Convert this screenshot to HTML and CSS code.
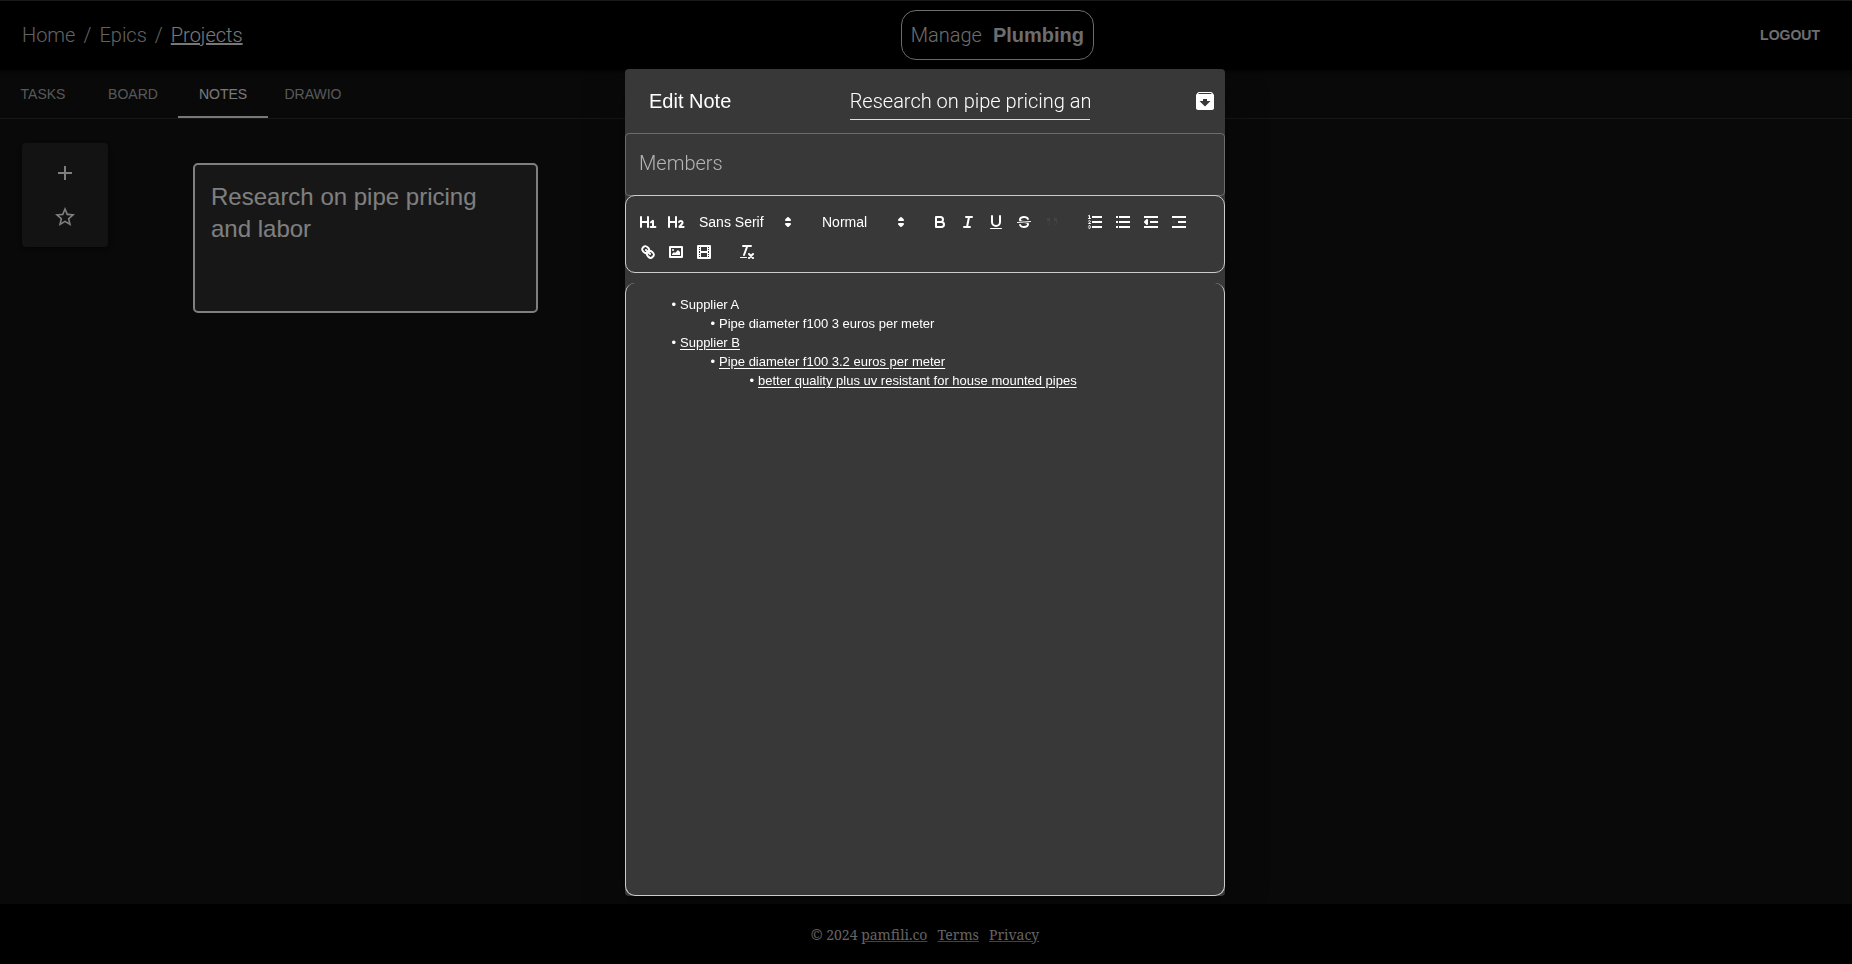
FILE: index.html
```
<!DOCTYPE html>
<html lang="en">
<head>
  <meta charset="utf-8">
  <meta name="viewport" content="width=device-width, initial-scale=1">
  <title>Manage Plumbing - Notes</title>
  <link rel="stylesheet" href="styles.css">
</head>
<body>
  <header class="topbar">
    <nav class="breadcrumbs" aria-label="Breadcrumb">
      <a href="#">Home</a>
      <span>/</span>
      <a href="#">Epics</a>
      <span>/</span>
      <a href="#" class="current">Projects</a>
    </nav>
    <div class="brand"><span>Manage</span><strong>Plumbing</strong></div>
    <button class="logout" type="button">LOGOUT</button>
  </header>

  <nav class="tabs">
    <a href="#" class="tab">TASKS</a>
    <a href="#" class="tab">BOARD</a>
    <a href="#" class="tab active">NOTES</a>
    <a href="#" class="tab">DRAWIO</a>
  </nav>

  <main class="content">
    <aside class="actions">
      <button type="button" aria-label="Add note">
        <svg viewBox="0 0 24 24"><path d="M19 13h-6v6h-2v-6H5v-2h6V5h2v6h6v2z"/></svg>
      </button>
      <button type="button" aria-label="Favourites">
        <svg viewBox="0 0 24 24"><path d="M22 9.24l-7.19-.62L12 2 9.19 8.63 2 9.24l5.46 4.73L5.82 21 12 17.27 18.18 21l-1.63-7.03L22 9.24zM12 15.4l-3.76 2.27 1-4.28-3.32-2.88 4.38-.38L12 6.1l1.71 4.04 4.38.38-3.32 2.88 1 4.28L12 15.4z"/></svg>
      </button>
    </aside>
    <article class="note-card">Research on pipe pricing and labor</article>
  </main>

  <footer class="footer">
    <span>© 2024 <a href="#">pamfili.co</a></span>
    <a href="#">Terms</a>
    <a href="#">Privacy</a>
  </footer>

  <div class="backdrop">
    <section class="modal" role="dialog" aria-label="Edit Note">
      <div class="modal-header">
        <h2>Edit Note</h2>
        <input class="note-title" type="text" aria-label="Note title" value="Research on pipe pricing and labor">
        <button class="archive" type="button" aria-label="Archive">
          <svg viewBox="0 0 24 24"><path d="M20.54 5.23l-1.39-1.68C18.88 3.21 18.47 3 18 3H6c-.47 0-.88.21-1.16.55L3.46 5.23C3.17 5.57 3 6.02 3 6.5V19c0 1.1.9 2 2 2h14c1.1 0 2-.9 2-2V6.5c0-.48-.17-.93-.46-1.27zM12 17.5L6.5 12H10v-2h4v2h3.5L12 17.5zM5.12 5l.81-1h12l.94 1H5.12z"/></svg>
        </button>
      </div>

      <input class="members" type="text" aria-label="Members" placeholder="Members">

      <div class="toolbar">
        <div class="formats">
          <button type="button" aria-label="Heading 1">
            <svg viewBox="0 0 18 18"><path class="stroke" d="M2 4V14M9 4V14M2 9H9M12 9.3L14 7.8V14M11.7 14H16.4"/></svg>
          </button>
          <button type="button" aria-label="Heading 2">
            <svg viewBox="0 0 18 18"><path class="stroke" d="M2 4V14M9 4V14M2 9H9M12 9C12.4 7.5 15.6 7.4 15.6 9.4C15.6 11 13.5 11.8 12.4 14H16.6"/></svg>
          </button>
          <label class="picker picker-font">
            <select aria-label="Font"><option>Sans Serif</option><option>Serif</option><option>Monospace</option></select>
            <svg viewBox="0 0 18 18"><path class="stroke fill" d="M7 11L9 13L11 11ZM7 7L9 5L11 7Z"/></svg>
          </label>
        </div>
        <div class="formats">
          <label class="picker picker-size">
            <select aria-label="Size"><option>Normal</option><option>Small</option><option>Large</option></select>
            <svg viewBox="0 0 18 18"><path class="stroke fill" d="M7 11L9 13L11 11ZM7 7L9 5L11 7Z"/></svg>
          </label>
        </div>
        <div class="formats">
          <button type="button" aria-label="Bold">
            <svg viewBox="0 0 18 18"><path class="stroke" d="M5 4H9.5A2.5 2.5 0 0 1 9.5 9H5ZM5 9H10.5A2.5 2.5 0 0 1 10.5 14H5Z"/></svg>
          </button>
          <button type="button" aria-label="Italic">
            <svg viewBox="0 0 18 18"><path class="stroke" d="M7 4H13M5 14H11M8 14L10 4"/></svg>
          </button>
          <button type="button" aria-label="Underline">
            <svg viewBox="0 0 18 18"><path class="stroke" d="M5 3V9a4 4 0 0 0 8 0V3"/><rect class="fill" x="3" y="15" width="12" height="1" rx=".5"/></svg>
          </button>
          <button type="button" aria-label="Strike">
            <svg viewBox="0 0 18 18"><path class="stroke thin" d="M15.5 8.5L2.5 9.5"/><path class="fill" d="M9.007,8C6.542,7.791,6,7.519,6,6.5,6,5.792,7.283,5,9,5c1.571,0,2.765.679,2.969,1.309a1,1,0,0,0,1.9-.617C13.356,4.106,11.354,3,9,3,6.2,3,4,4.538,4,6.5a3.2,3.2,0,0,0,.5,1.843Z"/><path class="fill" d="M8.984,10C11.457,10.208,12,10.479,12,11.5c0,.708-1.283,1.5-3,1.5-1.571,0-2.765-.679-2.969-1.309a1,1,0,1,0-1.9.617C4.644,13.894,6.646,15,9,15c2.8,0,5-1.538,5-3.5a3.2,3.2,0,0,0-.5-1.843Z"/></svg>
          </button>
          <button class="dim" type="button" aria-label="Blockquote">
            <svg viewBox="0 0 18 18"><rect class="fill" x="4" y="5" width="3" height="3"/><rect class="fill" x="11" y="5" width="3" height="3"/><path class="stroke thin" d="M7 8c0 4-3 5-3 5M14 8c0 4-3 5-3 5"/></svg>
          </button>
        </div>
        <div class="formats">
          <button type="button" aria-label="Ordered list">
            <svg viewBox="0 0 18 18"><path class="stroke square" d="M7 4H15M7 9H15M7 14H15"/><path class="stroke thin" d="M2.5 5.5H4.5M2.5 2.8L3.5 2.3V5.5M4.5 10.5h-2c0-.234,1.85-1.076,1.85-2.234A.959.959,0,0,0,2.5,8.156M2.5,14.846a.959.959,0,0,0,1.85-.109A.7.7,0,0,0,3.75,14a.688.688,0,0,0,.6-.736.959.959,0,0,0-1.85-.109"/></svg>
          </button>
          <button type="button" aria-label="Bullet list">
            <svg viewBox="0 0 18 18"><path class="stroke square" d="M6 4H15M6 9H15M6 14H15"/><path class="fill" d="M2 3h2v2H2zM2 8h2v2H2zM2 13h2v2H2z"/></svg>
          </button>
          <button type="button" aria-label="Outdent">
            <svg viewBox="0 0 18 18"><path class="stroke square" d="M3 14H15M3 4H15M9 9H15"/><path class="stroke fill" d="M5 7V11L3 9Z"/></svg>
          </button>
          <button type="button" aria-label="Indent">
            <svg viewBox="0 0 18 18"><path class="stroke square" d="M3 14H15M3 4H15M9 9H15"/><path class="muted" d="M3 7V11L5 9Z"/></svg>
          </button>
        </div>
        <div class="formats">
          <button type="button" aria-label="Link">
            <svg viewBox="0 0 18 18"><path class="stroke" d="M7 7L11 11M8.9,4.577a3.476,3.476,0,0,1,.36,4.679A3.476,3.476,0,0,1,4.577,8.9C3.185,7.5,2.035,6.4,4.217,4.217S7.5,3.185,8.9,4.577ZM13.423,9.1a3.476,3.476,0,0,0-4.679-.36,3.476,3.476,0,0,0,.36,4.679c1.392,1.392,2.5,2.542,4.679.36S14.815,10.5,13.423,9.1Z"/></svg>
          </button>
          <button type="button" aria-label="Image">
            <svg viewBox="0 0 18 18"><rect class="stroke" x="3" y="4" width="12" height="10"/><circle class="fill" cx="6" cy="7" r="1"/><path class="fill" d="M5 12V11L7 9L8 10L11 7L13 9V12Z"/></svg>
          </button>
          <button type="button" aria-label="Video">
            <svg viewBox="0 0 18 18"><rect class="stroke" x="3" y="3" width="12" height="12"/><path class="fill" d="M5 3h1v12H5zM12 3h1v12h-1zM5 8h8v2H5zM3 5h3v1H3zM3 7h3v1H3zM3 10h3v1H3zM3 12h3v1H3zM12 5h3v1h-3zM12 7h3v1h-3zM12 10h3v1h-3zM12 12h3v1h-3z"/></svg>
          </button>
        </div>
        <div class="formats">
          <button type="button" aria-label="Clear formatting">
            <svg viewBox="0 0 18 18"><path class="stroke" d="M5 3H13M6 12L9.35 3M11 11L15 15M15 11L11 15"/><rect class="fill" x="2" y="14" width="7" height="1" rx=".5"/></svg>
          </button>
        </div>
      </div>

      <div class="editor" contenteditable="true" spellcheck="false">
        <ul>
          <li>Supplier A</li>
          <li class="indent-1">Pipe diameter f100 3 euros per meter</li>
          <li><u>Supplier B</u></li>
          <li class="indent-1"><u>Pipe diameter f100 3.2 euros per meter</u></li>
          <li class="indent-2"><u>better quality plus uv resistant for house mounted pipes</u></li>
        </ul>
      </div>
    </section>
  </div>
</body>
</html>
```
FILE: styles.css
```
* {
  box-sizing: border-box;
}
body {
  margin: 0;
  min-height: 100vh;
  display: flex;
  flex-direction: column;
  background: #121212;
  color: #fff;
  font-family: "Liberation Sans", Arial, sans-serif;
}
button {
  background: none;
  border: none;
  color: inherit;
  font-family: inherit;
  cursor: pointer;
}
svg {
  display: block;
  fill: currentColor;
}

/* top bar */
.topbar {
  display: flex;
  align-items: center;
  justify-content: space-between;
  height: 70px;
  padding: 0 24px 2px 22px;
  background: #000;
  border-top: 1px solid #333;
  box-shadow: 0 2px 4px rgba(0, 0, 0, 0.5);
}
.breadcrumbs {
  display: flex;
  gap: 8px;
  font-family: Roboto, sans-serif;
  font-size: 20px;
  font-weight: 300;
  color: #c4c4c4;
}
.breadcrumbs a {
  color: inherit;
  text-decoration: none;
}
.breadcrumbs .current {
  color: #f0f0f0;
  text-decoration: underline;
}
.brand {
  display: flex;
  align-items: baseline;
  gap: 11px;
  height: 50px;
  padding: 0 9px;
  border: 1px solid #ddd;
  border-radius: 15px;
  font-size: 20px;
  line-height: 48px;
  color: #ddd;
}
.brand span {
  font-family: Roboto, sans-serif;
  font-weight: 300;
}
.logout {
  padding: 6px 8px;
  font-size: 14px;
  font-weight: bold;
  color: #ddd;
}

/* tabs */
.tabs {
  display: flex;
  height: 49px;
  margin-left: -2px;
  border-bottom: 1px solid #2c2c2c;
}
.tab {
  display: flex;
  align-items: center;
  justify-content: center;
  width: 90px;
  padding-top: 2px;
  border-bottom: 2px solid transparent;
  color: #b0b0b0;
  font-size: 14px;
  text-decoration: none;
}
.tab.active {
  color: #f0f0f0;
  border-color: #f0f0f0;
}

/* notes */
.content {
  flex: 1;
  display: flex;
  align-items: flex-start;
  gap: 85px;
  padding: 24px 22px;
}
.actions {
  display: flex;
  flex-direction: column;
  align-items: center;
  gap: 4px;
  width: 86px;
  padding: 10px 0;
  background: #262626;
  border-radius: 4px;
  box-shadow: 0 2px 4px rgba(0, 0, 0, 0.5);
}
.actions button {
  padding: 8px;
}
.actions svg {
  width: 24px;
  height: 24px;
}
.note-card {
  width: 345px;
  height: 150px;
  margin-top: 20px;
  padding: 16px;
  background: #2e2e2e;
  border: 2px solid #fff;
  border-radius: 5px;
  font-size: 24px;
  line-height: 32px;
}

.footer {
  display: flex;
  justify-content: center;
  align-items: center;
  gap: 10px;
  height: 60px;
  padding-right: 2px;
  background: #000;
  color: #ccc;
  font-family: "Noto Serif", "DejaVu Serif", serif;
  font-size: 14px;
}
.footer a {
  color: inherit;
  text-decoration: underline #888;
}

/* edit dialog */
.backdrop {
  position: fixed;
  inset: 0;
  display: flex;
  justify-content: center;
  align-items: stretch;
  padding: 69px 2px 68px 0;
  background: rgba(0, 0, 0, 0.5);
}
.modal {
  display: flex;
  flex-direction: column;
  width: 600px;
  background: #383838;
  border-radius: 4px;
  box-shadow: 0 9px 46px 8px rgba(0, 0, 0, 0.2), 0 11px 15px -7px rgba(0, 0, 0, 0.2);
}
.modal-header {
  display: flex;
  align-items: center;
  justify-content: space-between;
  height: 64px;
  padding: 0 8px 0 24px;
}
.modal-header h2 {
  margin: 0;
  padding-right: 15px;
  font-size: 20px;
  font-weight: normal;
}
.note-title {
  width: 240px;
  height: 38px;
  padding: 0;
  background: none;
  border: none;
  border-bottom: 1px solid #ddd;
  color: #fff;
  font-family: Roboto, sans-serif;
  font-size: 20px;
  font-weight: 300;
}
.archive {
  padding: 0;
}
.archive svg {
  width: 24px;
  height: 24px;
}
.members {
  height: 63px;
  padding: 0 13px 3px;
  background: none;
  border: 1px solid #6c6c6c;
  border-radius: 4px;
  color: #fff;
  font-family: Roboto, sans-serif;
  font-size: 20px;
  font-weight: 300;
}
.members::placeholder {
  color: #b5b5b5;
}

/* editor toolbar */
.toolbar {
  display: flex;
  flex-wrap: wrap;
  gap: 6px 15px;
  margin-top: -1px;
  padding: 14px 8px 8px;
  border: 1px solid #ccc;
  border-radius: 10px;
}
.formats {
  display: flex;
}
.formats button {
  width: 28px;
  height: 24px;
  padding: 3px 5px;
}
.formats svg {
  width: 18px;
  height: 18px;
  fill: none;
}
.formats .stroke {
  stroke: #fff;
  stroke-width: 2;
  stroke-linecap: round;
  stroke-linejoin: round;
}
.formats .thin {
  stroke-width: 1;
}
.formats .square {
  stroke-linecap: square;
}
.formats .fill {
  fill: #fff;
}
.formats .muted {
  fill: #444;
}
.formats .dim .stroke {
  stroke: #444;
}
.formats .dim .fill {
  fill: #444;
}
.picker {
  display: flex;
  align-items: center;
  height: 24px;
  padding: 0 1px;
}
.picker-font {
  width: 108px;
}
.picker-size {
  width: 98px;
}
.picker select {
  flex: 1;
  min-width: 0;
  padding: 0 0 0 8px;
  appearance: none;
  background: none;
  border: none;
  color: #fff;
  font-family: inherit;
  font-size: 14px;
}

.editor {
  flex: 1;
  margin-top: 10px;
  padding: 12px 15px;
  border: 1px solid #ccc;
  border-top: none;
  border-radius: 10px;
  outline: none;
  font-size: 13px;
  line-height: 19px;
}
.editor ul {
  margin: 0;
  padding: 0;
  list-style: none;
}
.editor li {
  padding-left: 39px;
}
.editor li::before {
  content: "•";
  display: inline-block;
  width: 16px;
  margin-left: -20px;
  margin-right: 4px;
  text-align: right;
}
.editor u {
  text-underline-offset: 2px;
}
.editor .indent-1 {
  padding-left: 78px;
}
.editor .indent-2 {
  padding-left: 117px;
}
```
